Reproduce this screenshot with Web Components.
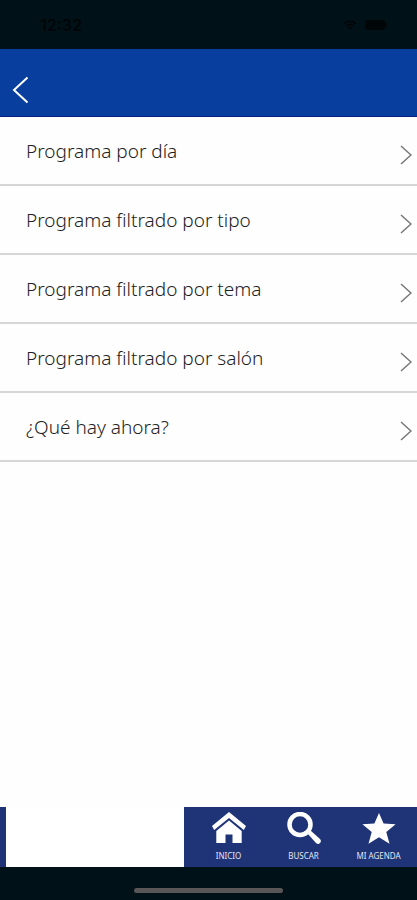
<!DOCTYPE html>
<html lang="es">
<head>
<meta charset="utf-8">
<meta name="viewport" content="width=device-width, initial-scale=1">
<title>Programa</title>
<style>
    body {
        margin: 0;
        font-family: "Noto Sans", "Open Sans", sans-serif;
        background-color: #fefefe;
    }
</style>
</head>
<body>
<program-app>
    <status-bar slot="top" time="12:32"></status-bar>
    <nav-header slot="top"></nav-header>

    <menu-item href="#dia">Programa por día</menu-item>
    <menu-item href="#tipo">Programa filtrado por tipo</menu-item>
    <menu-item href="#tema">Programa filtrado por tema</menu-item>
    <menu-item href="#salon">Programa filtrado por salón</menu-item>
    <menu-item href="#ahora">¿Qué hay ahora?</menu-item>

    <tab-bar slot="bottom">
        <tab-item icon="home" href="#inicio">INICIO</tab-item>
        <tab-item icon="search" href="#buscar">BUSCAR</tab-item>
        <tab-item icon="star" href="#agenda">MI AGENDA</tab-item>
    </tab-bar>
    <home-indicator slot="bottom"></home-indicator>
</program-app>

<script>
class ProgramApp extends HTMLElement {
    constructor() {
        super();
        this.attachShadow({ mode: 'open' });
        this.shadowRoot.innerHTML = `
            <style>
                :host {
                    display: flex;
                    flex-direction: column;
                    min-height: 100vh;
                }

                main {
                    flex: 1;
                }
            </style>

            <slot name="top"></slot>
            <main><slot></slot></main>
            <slot name="bottom"></slot>
        `;
    }
}

class StatusBar extends HTMLElement {
    constructor() {
        super();
        this.attachShadow({ mode: 'open' });
        this.shadowRoot.innerHTML = `
            <style>
                :host {
                    display: flex;
                    align-items: center;
                    justify-content: space-between;
                    box-sizing: border-box;
                    height: 49px;
                    padding: 0 30px 0 40px;
                    background-color: #001217;
                    color: #000508;
                    font: 600 16px Inter, sans-serif;
                }

                div {
                    display: flex;
                    align-items: center;
                    gap: 8px;
                }

                svg {
                    display: block;
                }
            </style>

            <span></span>
            <div>
                <svg width="14" height="12" viewBox="0 0 16 12" fill="none" stroke="currentColor" stroke-width="2">
                    <path d="M1.5 4.5Q8 -1.5 14.5 4.5M4 7.2Q8 3.5 12 7.2"/>
                    <path d="M5.8 8.8Q8 7 10.2 8.8L8 11.5z" fill="currentColor" stroke="none"/>
                </svg>
                <svg width="22" height="10" viewBox="0 0 22 10" fill="currentColor">
                    <rect width="20" height="10" rx="2"/>
                    <rect x="20.5" y="3" width="1.5" height="4" rx="0.7"/>
                </svg>
            </div>
        `;
    }

    connectedCallback() {
        this.shadowRoot.querySelector('span').textContent = this.getAttribute('time');
    }
}

class NavHeader extends HTMLElement {
    constructor() {
        super();
        this.attachShadow({ mode: 'open' });
        this.shadowRoot.innerHTML = `
            <style>
                :host {
                    display: flex;
                    align-items: flex-end;
                    box-sizing: border-box;
                    height: 68px;
                    padding: 0 4px 4px;
                    background-color: #083e9e;
                    border-bottom: 1px solid #061f80;
                }

                button {
                    padding: 8px;
                    border: 0;
                    background: none;
                    color: #fff;
                    cursor: pointer;
                }

                svg {
                    display: block;
                }
            </style>

            <button type="button" aria-label="Volver">
                <svg width="17" height="28" viewBox="0 0 17 28" fill="none" stroke="currentColor" stroke-width="2">
                    <path d="M15.5 1.5L2 14l13.500 12.500"/>
                </svg>
            </button>
        `;
        this.shadowRoot.querySelector('button').addEventListener('click', () => history.back());
    }
}

class MenuItem extends HTMLElement {
    constructor() {
        super();
        this.attachShadow({ mode: 'open' });
        this.shadowRoot.innerHTML = `
            <style>
                :host {
                    display: block;
                }

                a {
                    display: flex;
                    align-items: center;
                    justify-content: space-between;
                    box-sizing: border-box;
                    height: 69px;
                    padding: 0 5px 0 26px;
                    border-bottom: 2px solid #d6d6d6;
                    color: #222;
                    font-size: 19px;
                    font-weight: 300;
                    line-height: 26px;
                    text-decoration: none;
                }

                svg {
                    flex: none;
                    padding-top: 8px;
                    color: #777;
                }
            </style>

            <a>
                <span><slot></slot></span>
                <svg width="12" height="20" viewBox="0 0 12 20" fill="none" stroke="currentColor" stroke-width="1.500">
                    <path d="M1 1l10 9-10 9"/>
                </svg>
            </a>
        `;
    }

    connectedCallback() {
        this.shadowRoot.querySelector('a').href = this.getAttribute('href');
    }
}

class TabBar extends HTMLElement {
    constructor() {
        super();
        this.attachShadow({ mode: 'open' });
        this.shadowRoot.innerHTML = `
            <style>
                :host {
                    display: flex;
                    height: 60px;
                    background-color: #1f3377;
                }

                .logo {
                    width: 178px;
                    margin-left: 6px;
                    background-color: #fff;
                }

                nav {
                    display: flex;
                    flex: 1;
                    justify-content: flex-end;
                    padding-right: 1px;
                }
            </style>

            <div class="logo"></div>
            <nav><slot></slot></nav>
        `;
    }
}

const ICONS = {
    home: `<path d="M17 0L0 14l2.200 4L17 6l14.800 12L34 14z"/>
           <path d="M17 8.500L4.300 19V31H13.500v-8.500h7V31h9.200V19z"/>`,
    search: `<circle cx="13" cy="12.500" r="10.500" fill="none" stroke="currentColor" stroke-width="4.500"/>
             <path d="M20 21l3-3 10 9q1.800 2 0 4t-4 0z"/>`,
    star: `<path d="M17 1l4.600 10.500 12 .8-9.300 7.700 3.200 11.800L17 25.300 6.500 31.800 9.700 20 .4 12.300l12-.8z"/>`
};

class TabItem extends HTMLElement {
    constructor() {
        super();
        this.attachShadow({ mode: 'open' });
        this.shadowRoot.innerHTML = `
            <style>
                :host {
                    display: block;
                    width: 75px;
                }

                a {
                    display: flex;
                    flex-direction: column;
                    align-items: center;
                    gap: 5px;
                    padding-top: 5px;
                    color: #fff;
                    font-size: 8px;
                    line-height: 12px;
                    text-decoration: none;
                    white-space: nowrap;
                }

                span {
                    color: #e2e6f4;
                }
            </style>

            <a>
                <svg width="34" height="33" viewBox="0 0 34 33" fill="currentColor"></svg>
                <span><slot></slot></span>
            </a>
        `;
    }

    connectedCallback() {
        this.shadowRoot.querySelector('a').href = this.getAttribute('href');
        this.shadowRoot.querySelector('svg').innerHTML = ICONS[this.getAttribute('icon')];
    }
}

class HomeIndicator extends HTMLElement {
    constructor() {
        super();
        this.attachShadow({ mode: 'open' });
        this.shadowRoot.innerHTML = `
            <style>
                :host {
                    display: flex;
                    align-items: flex-end;
                    justify-content: center;
                    box-sizing: border-box;
                    height: 33px;
                    padding-bottom: 7px;
                    background-color: #001217;
                }

                div {
                    width: 149px;
                    height: 5px;
                    border-radius: 3px;
                    background-color: #585656;
                }
            </style>

            <div></div>
        `;
    }
}

customElements.define('program-app', ProgramApp);
customElements.define('status-bar', StatusBar);
customElements.define('nav-header', NavHeader);
customElements.define('menu-item', MenuItem);
customElements.define('tab-bar', TabBar);
customElements.define('tab-item', TabItem);
customElements.define('home-indicator', HomeIndicator);
</script>
</body>
</html>
